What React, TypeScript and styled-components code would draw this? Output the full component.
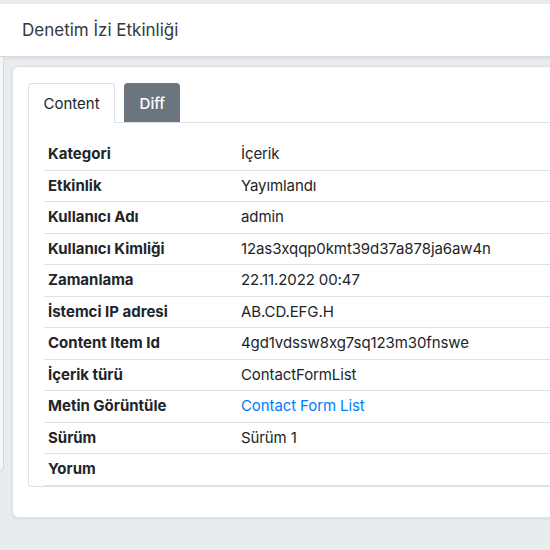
import styled, { createGlobalStyle } from "styled-components";

const GlobalStyle = createGlobalStyle`
  html, body {
    margin: 0;
    padding: 0;
    background: #e9ecef;
    overflow: hidden;
    font-family: Inter, "Liberation Sans", "Noto Sans", sans-serif;
    color: #212529;
  }
  * { box-sizing: border-box; }
`;

const Viewport = styled.div`
  width: 100vw;
  height: 550px;
  overflow: hidden;
`;

const Page = styled.div`
  width: 780px;
  height: 550px;
  padding-top: 4px;
  background: #e9ecef;
`;

const Header = styled.header`
  height: 53px;
  background: #ffffff;
  border-bottom: 1px solid #d3d7db;
  box-shadow: 0 2px 3px rgba(0, 0, 0, 0.06);
  display: flex;
  align-items: center;
  padding-left: 22px;
  font-size: 17px;
  color: #343a40;
`;

const Body = styled.div`
  display: flex;
  gap: 8px;
  align-items: flex-start;
`;

const Sidebar = styled.aside`
  width: 4px;
  height: 414px;
  background: #f4f5f7;
  border-right: 1px solid #d5d9dd;
  border-bottom: 1px solid #d5d9dd;
  border-bottom-right-radius: 4px;
`;

const Card = styled.section`
  flex: 1;
  margin-top: 9px;
  background: #ffffff;
  border: 1px solid #dde1e5;
  border-radius: 6px;
  box-shadow: 0 1px 3px rgba(0, 0, 0, 0.08);
  padding: 16px 16px 30px 15px;
`;

const Tabs = styled.nav`
  display: flex;
  gap: 9px;
  border-bottom: 1px solid #dee2e6;
`;

const Tab = styled.div<{ $active?: boolean }>`
  padding: 0 14.5px;
  display: flex;
  align-items: center;
  font-size: 15px;
  border: 1px solid ${(p) => (p.$active ? "#dee2e6" : "#6c757d")};
  border-bottom: none;
  border-radius: 4px 4px 0 0;
  margin-bottom: -1px;
  background: ${(p) => (p.$active ? "#ffffff" : "#6c757d")};
  color: ${(p) => (p.$active ? "#212529" : "#ffffff")};
  font-weight: ${(p) => (p.$active ? 400 : 500)};
  height: ${(p) => (p.$active ? "40px" : "39px")};
`;

const TabPane = styled.div`
  border: 1px solid #dee2e6;
  border-top: none;
  border-bottom-left-radius: 4px;
  padding: 16px 0 0 15px;
`;

const Table = styled.table`
  width: 100%;
  border-collapse: collapse;
  font-size: 15px;
  line-height: 22.5px;
`;

const Row = styled.tr`
  border-bottom: 1px solid #dee2e6;
`;

const Label = styled.th`
  width: 193px;
  padding: 4px;
  text-align: left;
  font-weight: 700;
  color: #212529;
`;

const Value = styled.td`
  padding: 4px;
  color: #212529;
  letter-spacing: -0.1px;
`;

const Link = styled.a`
  color: #007bff;
  text-decoration: none;
`;

const rows: [string, string, boolean?][] = [
  ["Kategori", "İçerik"],
  ["Etkinlik", "Yayımlandı"],
  ["Kullanıcı Adı", "admin"],
  ["Kullanıcı Kimliği", "12as3xqqp0kmt39d37a878ja6aw4n"],
  ["Zamanlama", "22.11.2022 00:47"],
  ["İstemci IP adresi", "AB.CD.EFG.H"],
  ["Content Item Id", "4gd1vdssw8xg7sq123m30fnswe"],
  ["İçerik türü", "ContactFormList"],
  ["Metin Görüntüle", "Contact Form List", true],
  ["Sürüm", "Sürüm 1"],
  ["Yorum", ""],
];

export default function App() {
  return (
    <Viewport>
      <GlobalStyle />
      <Page>
        <Header>Denetim İzi Etkinliği</Header>
        <Body>
          <Sidebar />
          <Card>
            <Tabs>
              <Tab $active>Content</Tab>
              <Tab>Diff</Tab>
            </Tabs>
            <TabPane>
              <Table>
                <tbody>
                  {rows.map(([label, value, link]) => (
                    <Row key={label}>
                      <Label>{label}</Label>
                      <Value>{link ? <Link href="#">{value}</Link> : value}</Value>
                    </Row>
                  ))}
                </tbody>
              </Table>
            </TabPane>
          </Card>
        </Body>
      </Page>
    </Viewport>
  );
}
